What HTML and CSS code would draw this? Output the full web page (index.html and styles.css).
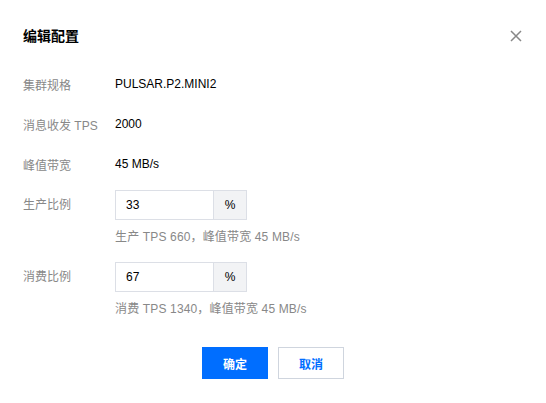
FILE: index.html
```html
<!DOCTYPE html>
<html lang="zh-CN">
<head>
<meta charset="utf-8">
<link rel="stylesheet" href="styles.css">
</head>
<body>
<div class="dialog">
  <div class="header">
    <div class="title">编辑配置</div>
    <button class="close" aria-label="关闭">
      <svg width="12" height="12" viewBox="0 0 12 12"><path d="M1 1 L11 11 M11 1 L1 11" stroke="#888" stroke-width="1.5" fill="none"/></svg>
    </button>
  </div>
  <div class="form">
    <div class="row"><div class="label">集群规格</div><div class="value">PULSAR.P2.MINI2</div></div>
    <div class="row"><div class="label">消息收发 TPS</div><div class="value">2000</div></div>
    <div class="row"><div class="label">峰值带宽</div><div class="value">45 MB/s</div></div>
    <div class="field first">
      <div class="label">生产比例</div>
      <div class="control">
        <div class="input-group"><div class="input">33</div><div class="addon">%</div></div>
        <div class="help">生产 TPS 660，峰值带宽 45 MB/s</div>
      </div>
    </div>
    <div class="field">
      <div class="label">消费比例</div>
      <div class="control">
        <div class="input-group"><div class="input">67</div><div class="addon">%</div></div>
        <div class="help">消费 TPS 1340，峰值带宽 45 MB/s</div>
      </div>
    </div>
  </div>
  <div class="footer">
    <button class="btn primary">确定</button>
    <button class="btn">取消</button>
  </div>
</div>
</body>
</html>
```
FILE: styles.css
```css
* { box-sizing: border-box; }
html, body { margin: 0; background: #fff; }
body {
  font-family: "Liberation Sans", "Noto Sans CJK SC", sans-serif;
  font-size: 12px;
  color: rgba(0,0,0,0.9);
}
.dialog { width: 546px; padding: 24px 23px 0 23px; }
.header { display: flex; justify-content: space-between; align-items: center; height: 24px; }
.title { font-size: 14px; font-weight: bold; line-height: 24px; color: #000; }
.close { border: 0; background: none; padding: 0; width: 12px; height: 12px; margin-right: 1px; display: flex; }
.form { margin-top: 16px; }
.row { display: flex; align-items: center; height: 40px; }
.label { width: 92px; color: #888; flex: none; }
.value { color: #000; }
.field { display: flex; align-items: flex-start; margin-top: 16px; }
.field.first { margin-top: 6px; }
.field .label { line-height: 30px; }
.input-group { display: flex; width: 132px; height: 30px; border: 1px solid #dcdfe6; }
.input { flex: 1; padding-left: 10px; line-height: 28px; color: #000; font-size: 12px; }
.addon { width: 33px; flex: none; background: #f2f3f5; border-left: 1px solid #dcdfe6; text-align: center; line-height: 28px; color: #000; }
.help { margin-top: 8px; line-height: 18px; color: #888; letter-spacing: 0.15px; }
.footer { display: flex; justify-content: center; gap: 10px; margin-top: 29px; }
.btn {
  width: 66px; height: 32px; border: 1px solid #cfd5de; background: #fff;
  color: #006eff; font-family: inherit; font-size: 12px; font-weight: bold; padding: 0;
}
.btn.primary { background: #006eff; border-color: #006eff; color: #fff; }
```
